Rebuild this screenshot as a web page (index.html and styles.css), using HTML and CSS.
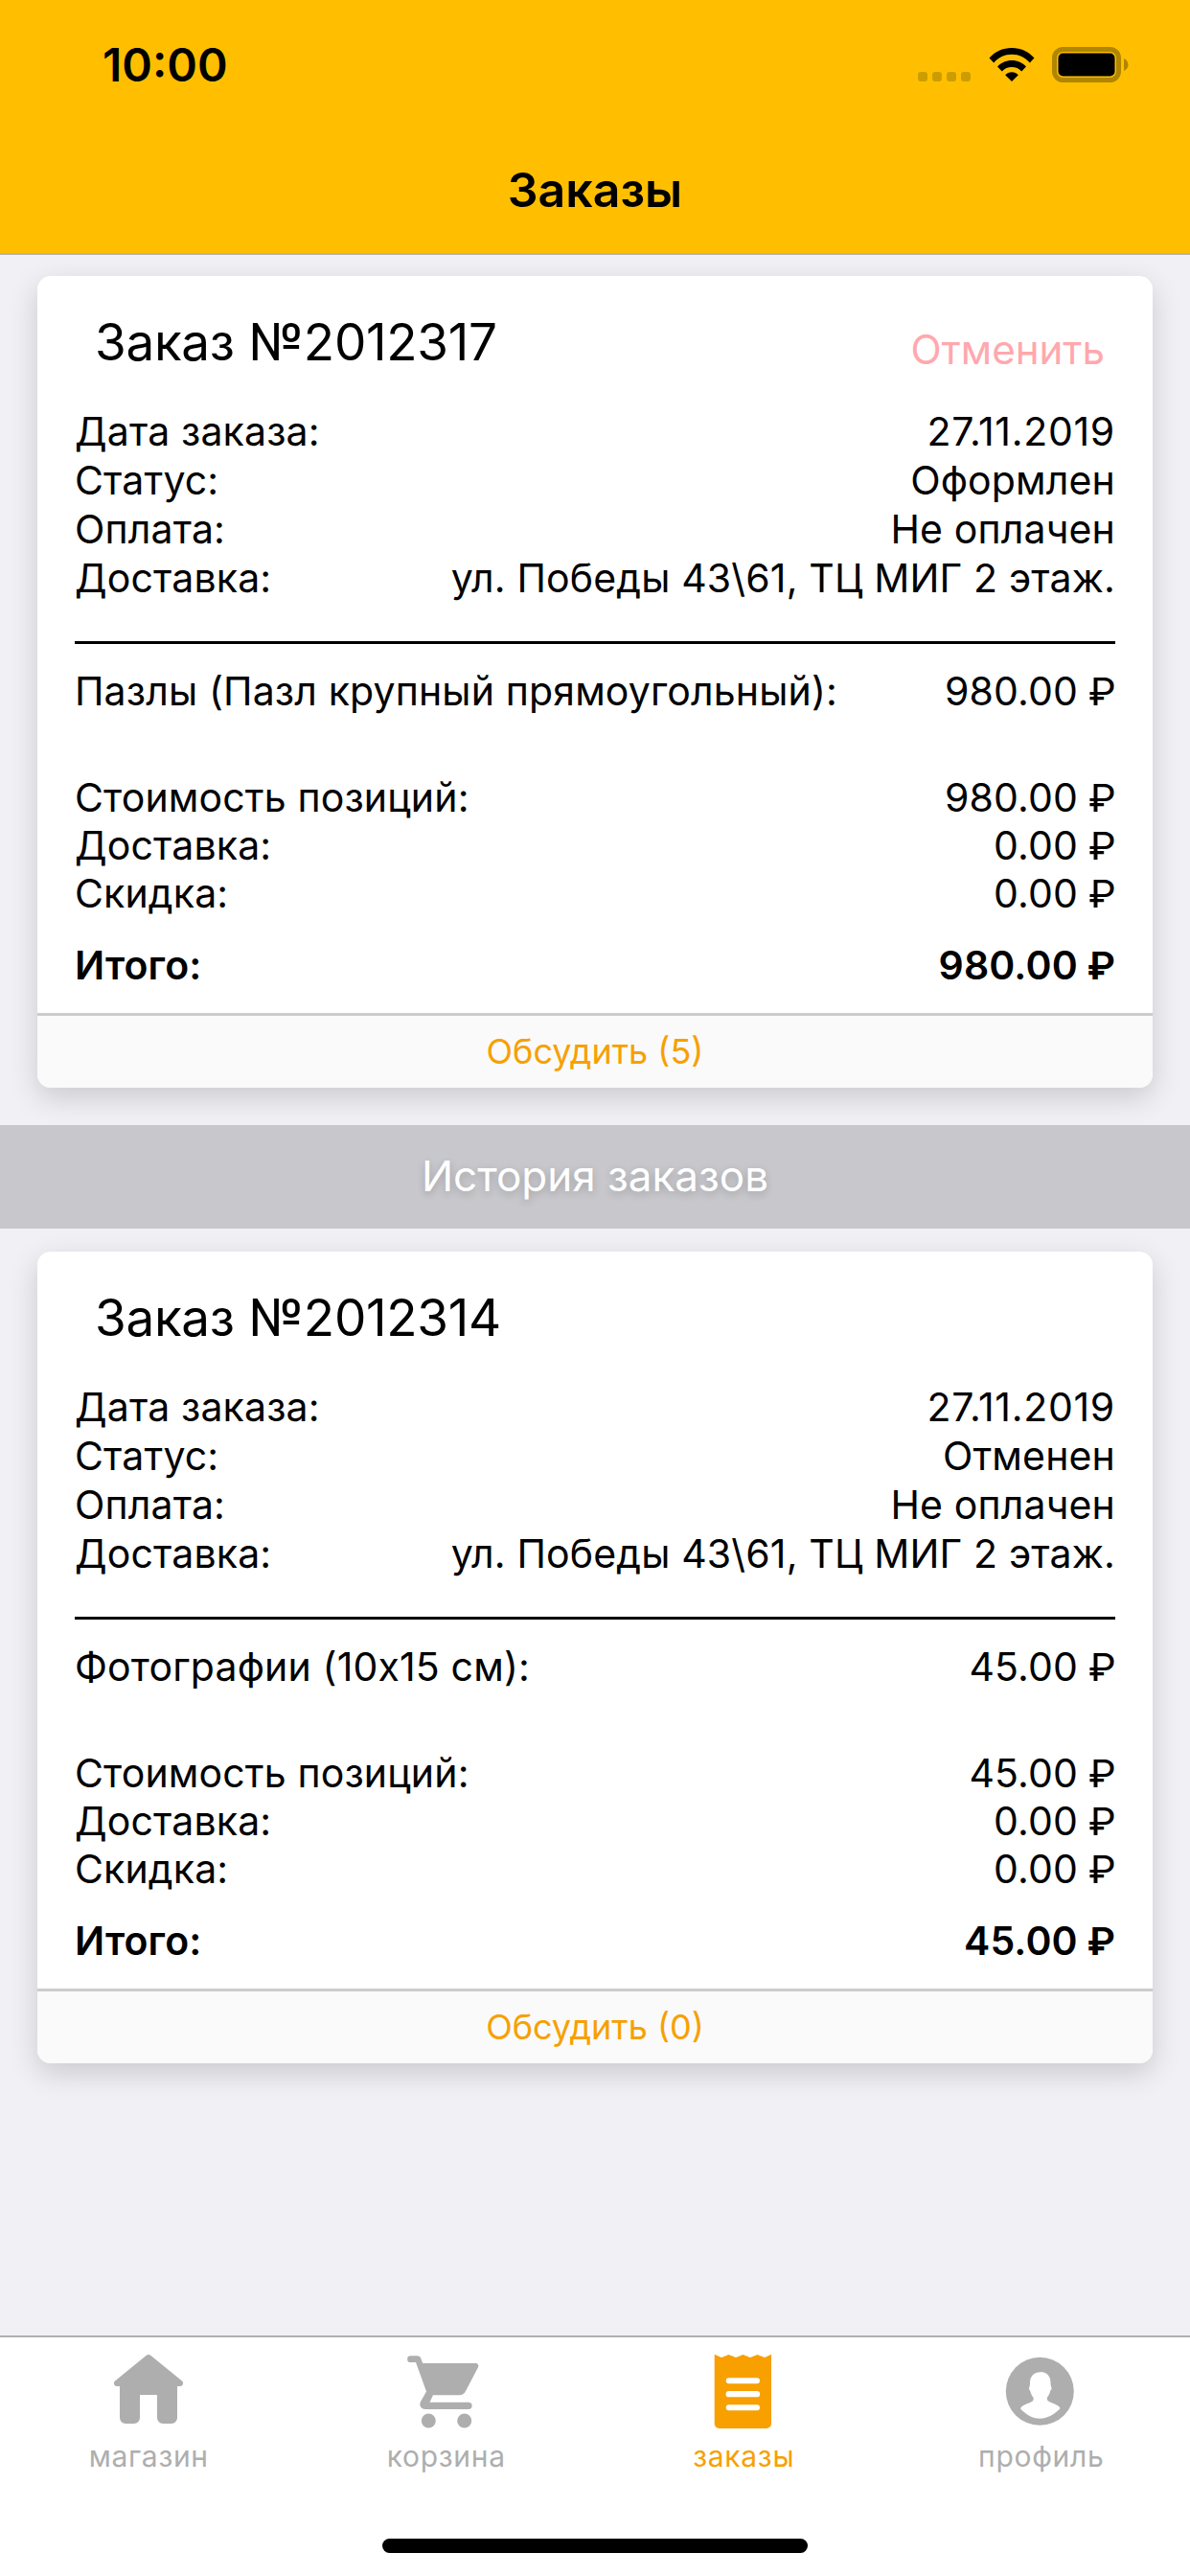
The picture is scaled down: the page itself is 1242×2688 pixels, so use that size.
FILE: index.html
```html
<!DOCTYPE html>
<html>
<head>
  <title>Заказы</title>
  <link rel="stylesheet" href="styles.css">
</head>
<body>
  <div class="app">
    <header class="header">
      <div class="status-bar">
        <span class="time">10:00</span>
        <div class="status-icons">
          <div class="signal"><i></i><i></i><i></i><i></i></div>
          <svg class="wifi" viewBox="0 0 48 36">
            <path d="M0.5 11.5C6.5 5 14.5 1 24 1s17.500 4 23.500 10.500l-4.700 4.900C37.800 11 31.500 7.800 24 7.800S10.200 11 5.200 16.400z"/>
            <path d="M9 20.500C12.800 16.400 18 14 24 14s11.200 2.400 15 6.500l-4.800 4.900C31.500 22.500 28 21 24 21s-7.500 1.500-10.200 4.400z"/>
            <path d="M17.200 29.200C19 27.300 21.300 26.300 24 26.300s5 1 6.800 2.900L24 36z"/>
          </svg>
          <svg class="battery" viewBox="0 0 80 37">
            <rect x="2.500" y="2.500" width="67" height="32" rx="9" fill="none" stroke="#b08500" stroke-width="5"/>
            <rect x="6.500" y="6.500" width="59" height="24" rx="5"/>
            <path d="M75 12c3 1.500 4.500 4 4.500 6.500s-1.500 5-4.500 6.500z" fill="#b08500"/>
          </svg>
        </div>
      </div>
      <h1 class="title">Заказы</h1>
    </header>

    <main class="content">
      <section class="card">
        <div class="card-head">
          <h2 class="order-no">Заказ №2012317</h2>
          <span class="cancel">Отменить</span>
        </div>
        <div class="rows info">
          <div class="row"><span>Дата заказа:</span><span class="date">27.11.2019</span></div>
          <div class="row"><span>Статус:</span><span>Оформлен</span></div>
          <div class="row"><span>Оплата:</span><span>Не оплачен</span></div>
          <div class="row"><span>Доставка:</span><span>ул. Победы 43\61, ТЦ МИГ 2 этаж.</span></div>
        </div>
        <div class="line"></div>
        <div class="row item"><span>Пазлы (Пазл крупный прямоугольный):</span><span>980.00 <b class="rub">₽</b></span></div>
        <div class="rows totals">
          <div class="row"><span>Стоимость позиций:</span><span>980.00 <b class="rub">₽</b></span></div>
          <div class="row"><span>Доставка:</span><span>0.00 <b class="rub">₽</b></span></div>
          <div class="row"><span>Скидка:</span><span>0.00 <b class="rub">₽</b></span></div>
        </div>
        <div class="row sum"><span>Итого:</span><span>980.00 <b class="rub">₽</b></span></div>
        <div class="discuss">Обсудить (5)</div>
      </section>

      <div class="history">История заказов</div>

      <section class="card">
        <div class="card-head">
          <h2 class="order-no">Заказ №2012314</h2>
        </div>
        <div class="rows info">
          <div class="row"><span>Дата заказа:</span><span class="date">27.11.2019</span></div>
          <div class="row"><span>Статус:</span><span>Отменен</span></div>
          <div class="row"><span>Оплата:</span><span>Не оплачен</span></div>
          <div class="row"><span>Доставка:</span><span>ул. Победы 43\61, ТЦ МИГ 2 этаж.</span></div>
        </div>
        <div class="line"></div>
        <div class="row item"><span>Фотографии (10х15 см):</span><span>45.00 <b class="rub">₽</b></span></div>
        <div class="rows totals">
          <div class="row"><span>Стоимость позиций:</span><span>45.00 <b class="rub">₽</b></span></div>
          <div class="row"><span>Доставка:</span><span>0.00 <b class="rub">₽</b></span></div>
          <div class="row"><span>Скидка:</span><span>0.00 <b class="rub">₽</b></span></div>
        </div>
        <div class="row sum"><span>Итого:</span><span>45.00 <b class="rub">₽</b></span></div>
        <div class="discuss">Обсудить (0)</div>
      </section>
    </main>

    <nav class="tabbar">
      <div class="tabs">
        <div class="tab">
          <svg class="tab-icon" viewBox="0 0 80 80">
            <path d="M37.500 2a4 4 0 0 1 5 0L75 28.500c2 1.800 1 5.500-2 5.500h-3v33a6 6 0 0 1-6 6H55a6 6 0 0 1-6-6V43H31v24a6 6 0 0 1-6 6H16a6 6 0 0 1-6-6V34H7c-3 0-4-3.700-2-5.500z"/>
          </svg>
          <span>магазин</span>
        </div>
        <div class="tab">
          <svg class="tab-icon" viewBox="2 0 80 80">
            <path d="M4.500 2.300h7c2 0 3.200 1 3.800 2.700l1.900 5h55.300c2.300 0 3.500 2.300 2.500 4.300L62 39c-1.500 3-3.500 4.300-6.500 4.300H28L24.500 50.700H65a3.650 3.650 0 0 1 0 7.300H20c-4.500 0-7-4.300-5-8L21 39.500 10 9H4.500a3.350 3.350 0 0 1 0-6.700z"/>
            <circle cx="23.300" cy="70" r="7.500"/>
            <circle cx="60.700" cy="70" r="7.500"/>
          </svg>
          <span>корзина</span>
        </div>
        <div class="tab active">
          <svg class="tab-icon" viewBox="0 0 80 80">
            <path fill-rule="evenodd" d="M9.700 0.700L17 4 24.500 1 32 4 39.500 1 47 4 54.500 1 62 4 69 0.700V73a5 5 0 0 1-5 5H14.700a5 5 0 0 1-5-5zM24.700 25.300a3 3 0 0 0 0 6H54a3 3 0 0 0 0-6zM24.700 39a3 3 0 0 0 0 6.300H54a3 3 0 0 0 0-6.300zM24.700 53.300a3 3 0 0 0 0 6H54a3 3 0 0 0 0-6z"/>
          </svg>
          <span>заказы</span>
        </div>
        <div class="tab">
          <svg class="tab-icon" viewBox="0 0 80 80">
            <circle cx="38.300" cy="39.300" r="35.500"/>
            <path fill="#fff" d="M38.500 19c7 0 11 4.500 11 11 0 2 .3 4 .8 5 .7 1.300 0 2.800-1 3.500-.6 3-2 5.500-3.300 7-.5 2 0 3.500 2 4.500 4 2 9 3.500 11 6 .5.700.5 1.300 0 1.800C53 63.500 46 67.800 38.300 67.800S24 63.500 18.500 58c-.5-.5-.5-1.100 0-1.800 2-2.500 7-4 11-6 2-1 2.500-2.500 2-4.500-1.300-1.500-2.700-4-3.300-7-1-.7-1.700-2.200-1-3.500.5-1 .8-3 .8-5 0-6.500 4-11 11-11z"/>
          </svg>
          <span>профиль</span>
        </div>
      </div>
      <div class="home-bar"></div>
    </nav>
  </div>
</body>
</html>
```

FILE: styles.css
```css
* {
  box-sizing: border-box;
}

html, body {
  margin: 0;
  padding: 0;
}

body {
  font-family: Inter, 'Liberation Sans', sans-serif;
  background: #f0f0f5;
  color: #000;
}

.app {
  width: 1242px;
  height: 2688px;
  display: flex;
  flex-direction: column;
  overflow: hidden;
}

/* header */
.header {
  height: 266px;
  flex: none;
  background: #ffbf00;
  border-bottom: 2px solid #b3b3b3;
}

.status-bar {
  height: 132px;
  display: flex;
  justify-content: space-between;
  padding: 44px 64px 0 107px;
}

.time {
  font-size: 48px;
  font-weight: 600;
  line-height: 48px;
}

.status-icons {
  display: flex;
  align-items: flex-start;
  margin-top: 5px;
}

.signal {
  display: flex;
  gap: 5px;
  margin-top: 26px;
}

.signal i {
  width: 10px;
  height: 10px;
  border-radius: 3px;
  background: #cc9d00;
}

.wifi {
  width: 48px;
  height: 36px;
  margin-left: 19px;
}

.battery {
  width: 80px;
  height: 37px;
  margin-left: 18px;
}

.title {
  margin: 0;
  text-align: center;
  font-size: 50px;
  font-weight: 600;
  line-height: 132px;
}

/* cards */
.content {
  flex: 1;
  padding-top: 22px;
}

.card {
  margin: 0 39px;
  height: 847px;
  padding: 0 39px;
  background: #fff;
  border-radius: 14px;
  overflow: hidden;
  display: flex;
  flex-direction: column;
  box-shadow: 0 10px 30px rgba(0, 0, 0, 0.16);
}

.card-head {
  height: 137px;
  flex: none;
  display: flex;
  justify-content: space-between;
  align-items: flex-start;
  padding: 37px 11px 0 21px;
}

.order-no {
  margin: 0;
  font-size: 53px;
  font-weight: 400;
  line-height: 64px;
  letter-spacing: -0.3px;
}

.cancel {
  color: #ffa8ad;
  font-size: 42px;
  line-height: 50px;
  margin-top: 15px;
}

.row {
  display: flex;
  justify-content: space-between;
  font-size: 41px;
  line-height: 50px;
  letter-spacing: 0.15px;
}

.info .row {
  line-height: 51px;
}

.date {
  letter-spacing: 0.7px;
}

.rub {
  font-family: Roboto, sans-serif;
  font-weight: inherit;
  line-height: 1;
}

.line {
  height: 3px;
  flex: none;
  margin-top: 40px;
  background: #000;
}

.item {
  margin-top: 24px;
}

.totals {
  margin-top: 61px;
}

.sum {
  margin-top: 25px;
  font-weight: 600;
}

.discuss {
  margin: auto -39px 0;
  height: 78px;
  flex: none;
  background: #fafafa;
  border-top: 3px solid #ccc;
  color: #f7a000;
  font-size: 36px;
  line-height: 75px;
  text-align: center;
}

.history {
  height: 108px;
  margin: 39px 0 24px;
  background: #c7c7cc;
  color: #fff;
  font-size: 44px;
  line-height: 106px;
  text-align: center;
  text-shadow: 0 3px 8px rgba(0, 0, 0, 0.2);
}

/* bottom tabs */
.tabbar {
  height: 251px;
  flex: none;
  background: #fff;
  border-top: 2px solid #b0b0b0;
  display: flex;
  flex-direction: column;
  align-items: center;
}

.tabs {
  width: 100%;
  display: grid;
  grid-template-columns: repeat(4, 1fr);
  padding-top: 17px;
}

.tab {
  display: flex;
  flex-direction: column;
  align-items: center;
  color: #aeaeae;
  fill: #aeaeae;
  font-size: 30px;
  letter-spacing: 0.7px;
  line-height: 34px;
}

.tab.active {
  color: #f7a000;
  fill: #f7a000;
}

.tab-icon {
  width: 80px;
  height: 80px;
  overflow: visible;
  margin-bottom: 10px;
}

.home-bar {
  width: 444px;
  height: 15px;
  margin-top: 69px;
  border-radius: 8px;
  background: #000;
}
```
